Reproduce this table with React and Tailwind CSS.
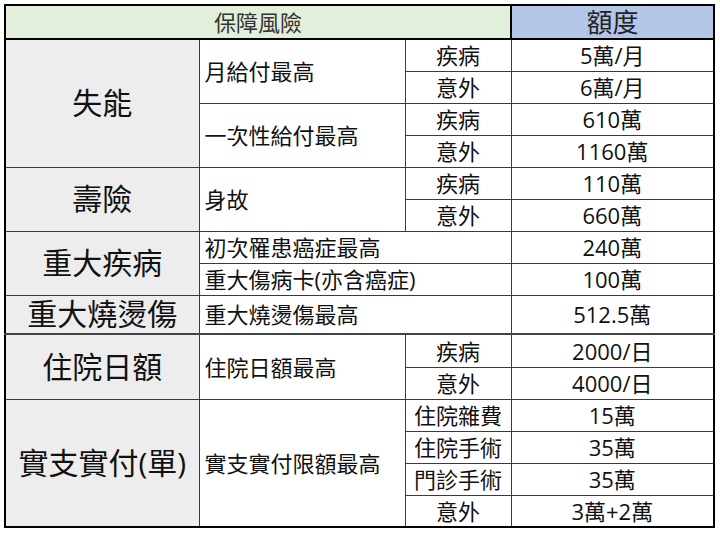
import React from "react";

const Td = ({ children, className = "", ...rest }) => (
  <td
    {...rest}
    className={"border border-[#3a3a3a] p-0 leading-none whitespace-nowrap " + className}
  >
    {children}
  </td>
);

const Label = ({ children, rowSpan }) => (
  <Td rowSpan={rowSpan} className="bg-[#ededed] text-center text-[30px]">
    {children}
  </Td>
);

const Item = ({ children, rowSpan, colSpan }) => (
  <Td rowSpan={rowSpan} colSpan={colSpan} className="text-left pl-[5px] text-[22px]">
    {children}
  </Td>
);

const Kind = ({ children }) => <Td className="text-center text-[22px]">{children}</Td>;

const Amount = ({ children }) => <Td className="text-center text-[22px]">{children}</Td>;

const App = () => {
  return (
    <div className="w-[720px] h-[534px] bg-white pt-[4px] pl-[4px] text-[#111] font-['Open_Sans','Noto_Sans_CJK_TC',sans-serif]">
      <table className="table-fixed w-[709px] border-2 border-black">
        <colgroup>
          <col className="w-[194px]" />
          <col className="w-[206px]" />
          <col className="w-[106px]" />
          <col className="w-[203px]" />
        </colgroup>
        <tbody>
          <tr className="h-[34px] border-b-2 border-black">
            <td colSpan={3} className="border-2 border-black bg-[#e2efda] text-center text-[22px] leading-none text-[#333] p-0">
              保障風險
            </td>
            <td className="border-2 border-black bg-[#b4c6e7] text-center text-[26px] leading-none text-[#222] p-0">
              額度
            </td>
          </tr>

          <tr className="h-[32px]">
            <Label rowSpan={4}>失能</Label>
            <Item rowSpan={2}>月給付最高</Item>
            <Kind>疾病</Kind>
            <Amount>5萬/月</Amount>
          </tr>
          <tr className="h-[32px]">
            <Kind>意外</Kind>
            <Amount>6萬/月</Amount>
          </tr>
          <tr className="h-[32px]">
            <Item rowSpan={2}>一次性給付最高</Item>
            <Kind>疾病</Kind>
            <Amount>610萬</Amount>
          </tr>
          <tr className="h-[32px]">
            <Kind>意外</Kind>
            <Amount>1160萬</Amount>
          </tr>

          <tr className="h-[32px]">
            <Label rowSpan={2}>壽險</Label>
            <Item rowSpan={2}>身故</Item>
            <Kind>疾病</Kind>
            <Amount>110萬</Amount>
          </tr>
          <tr className="h-[32px]">
            <Kind>意外</Kind>
            <Amount>660萬</Amount>
          </tr>

          <tr className="h-[32px]">
            <Label rowSpan={2}>重大疾病</Label>
            <Item colSpan={2}>初次罹患癌症最高</Item>
            <Amount>240萬</Amount>
          </tr>
          <tr className="h-[32px]">
            <Item colSpan={2}>重大傷病卡(亦含癌症)</Item>
            <Amount>100萬</Amount>
          </tr>

          <tr className="h-[39px]">
            <Label>重大燒燙傷</Label>
            <Item colSpan={2}>重大燒燙傷最高</Item>
            <Amount>512.5萬</Amount>
          </tr>

          <tr className="h-[33px] border-t-2 border-[#444]">
            <Label rowSpan={2}>住院日額</Label>
            <Item rowSpan={2}>住院日額最高</Item>
            <Kind>疾病</Kind>
            <Amount>2000/日</Amount>
          </tr>
          <tr className="h-[32px]">
            <Kind>意外</Kind>
            <Amount>4000/日</Amount>
          </tr>

          <tr className="h-[32px]">
            <Label rowSpan={4}>實支實付(單)</Label>
            <Item rowSpan={4}>實支實付限額最高</Item>
            <Kind>住院雜費</Kind>
            <Amount>15萬</Amount>
          </tr>
          <tr className="h-[32px]">
            <Kind>住院手術</Kind>
            <Amount>35萬</Amount>
          </tr>
          <tr className="h-[32px]">
            <Kind>門診手術</Kind>
            <Amount>35萬</Amount>
          </tr>
          <tr className="h-[32px]">
            <Kind>意外</Kind>
            <Amount>3萬+2萬</Amount>
          </tr>
        </tbody>
      </table>
    </div>
  );
};

export default App;
